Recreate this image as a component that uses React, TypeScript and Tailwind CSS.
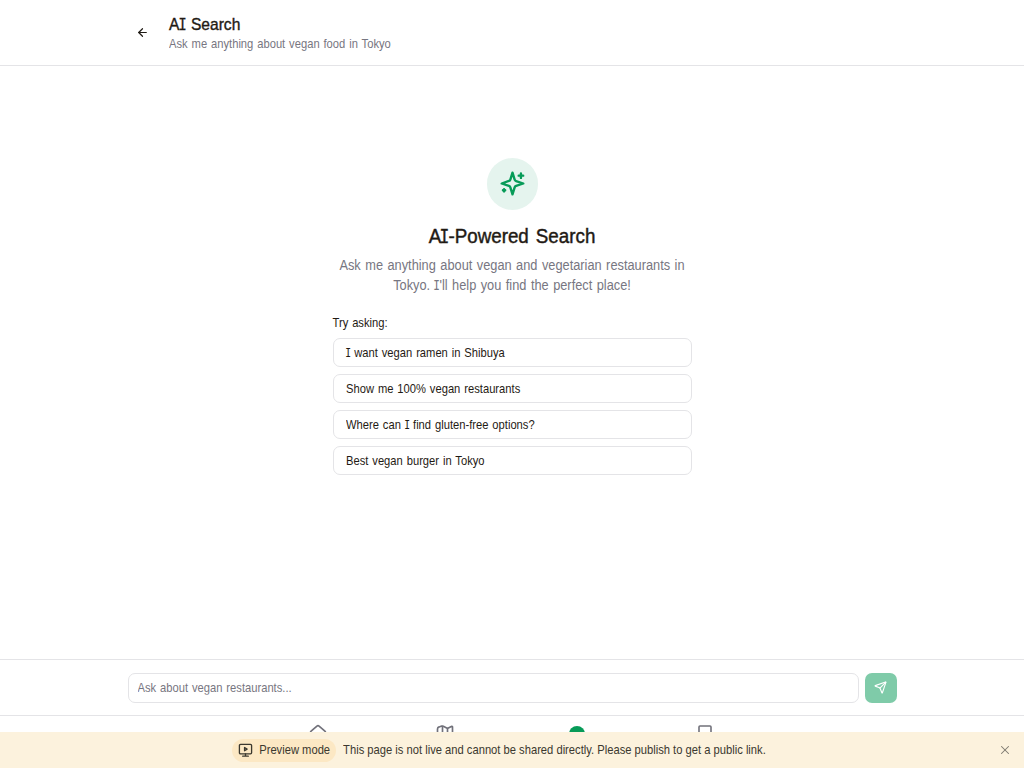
import type { ReactNode } from "react";
import { ArrowLeft, Send, House, X } from "lucide-react";

const suggestions: ReactNode[] = [
  <><SlabI /> want vegan ramen in Shibuya</>,
  "Show me 100% vegan restaurants",
  <>Where can <SlabI /> find gluten-free options?</>,
  "Best vegan burger in Tokyo",
];

function SlabI() {
  return <span className="inline-block w-[0.4em] text-center font-['DejaVu_Sans_Mono',monospace] text-[0.96em] leading-none"><span className="-mx-[0.11em] inline-block scale-x-[0.9]">I</span></span>;
}

function Sparkle() {
  return (
    <svg width="27" height="27" viewBox="0 0 24 24" fill="none" stroke="currentColor" strokeWidth="2.1" strokeLinecap="round" strokeLinejoin="round">
      <path d="m12 2.4-1.912 6.1a2 2 0 0 1-1.275 1.275L2.4 12l6.413 2.1a2 2 0 0 1 1.275 1.275L12 21.6l1.912-6.225a2 2 0 0 1 1.275-1.275L21.6 12l-6.413-2.1a2 2 0 0 1-1.275-1.275L12 2.4Z" />
      <path d="M4.5 17v2M19.5 3v4M3.5 18h2M17.5 5h4" />
    </svg>
  );
}

function MapIcon() {
  return (
    <svg width="20" height="20" viewBox="0 0 24 24" fill="none" stroke="currentColor" strokeWidth="2" strokeLinecap="round" strokeLinejoin="round">
      <path d="M3 6q0-2 2-2.500L8 2.500q1-.3 2 .2l4 2q1 .6 2 0l3.600-1.800A1 1 0 0 1 21 4v13l-6 3-6-3-6 3Z" />
      <path d="M9 3v14M15 6v14" />
    </svg>
  );
}

function ChatIcon() {
  return (
    <svg width="16" height="20" viewBox="0 0 16 20" fill="none" stroke="currentColor" strokeWidth="1.6" strokeLinejoin="round">
      <path d="M3 2h10a1 1 0 0 1 1 1v11H5l-3 3V3a1 1 0 0 1 1-1Z" />
    </svg>
  );
}

function PreviewIcon() {
  return (
    <svg width="15" height="15" viewBox="0 0 16 16" fill="none" stroke="currentColor" strokeWidth="1.4" strokeLinecap="round" strokeLinejoin="round">
      <rect x="1.5" y="1.5" width="13" height="10" rx="1.2" />
      <path d="M8 11.500v2.500M5 14h6M7 4.800v3.500l2.700-1.750z" />
    </svg>
  );
}

export default function App() {
  return (
    <div className="flex h-screen flex-col overflow-hidden bg-white font-['Liberation_Sans',Arial,sans-serif] text-[#1f1a14]">
      <header className="h-[66px] shrink-0 border-b border-[#e4e4e7]">
        <div className="mx-auto flex h-full w-[768px] items-center gap-3">
          <button className="flex size-[29px] items-center justify-center" aria-label="Back">
            <ArrowLeft size={13} strokeWidth={2.2} />
          </button>
          <div className="pt-[2px]">
            <h1 className="scale-y-[1.1] text-[15.6px] leading-[20px] [-webkit-text-stroke:0.35px] [word-spacing:1.2px]">A<SlabI /> Search</h1>
            <p className="mt-px scale-y-[1.12] text-[11.2px] leading-[18px] text-[#777681] [word-spacing:0.8px]">Ask me anything about vegan food in Tokyo</p>
          </div>
        </div>
      </header>

      <main className="flex min-h-0 flex-1 flex-col items-center pt-[92px]">
        <div className="flex h-[52px] w-[51px] items-center justify-center rounded-full bg-[#e5f4ee] pb-px text-[#079b58]">
          <Sparkle />
        </div>
        <h2 className="mt-[14px] scale-y-[1.06] text-[18.8px] leading-[26px] [-webkit-text-stroke:0.4px] [word-spacing:1.8px]">A<SlabI />-Powered Search</h2>
        <p className="mt-[7px] w-[359px] scale-y-[1.08] text-center text-[12.8px] leading-[18.5px] whitespace-nowrap text-[#777681] [word-spacing:0.9px]">
          Ask me anything about vegan and vegetarian restaurants in<br />Tokyo. <SlabI />'ll help you find the perfect place!
        </p>
        <section className="mt-[19px] w-[359px]">
          <h3 className="scale-y-[1.12] text-[11.2px] leading-[20px] [word-spacing:0.8px]">Try asking:</h3>
          <div className="mt-[5px] flex flex-col gap-[7px]">
            {suggestions.map((item, i) => (
              <button key={i} className="h-[29px] rounded-[7px] border border-[#e4e4e7] pt-px pr-3 pl-[12.5px] text-left text-[11.2px] [word-spacing:0.8px]"><span className="inline-block scale-y-[1.12]">{item}</span></button>
            ))}
          </div>
        </section>
      </main>

      <form className="flex h-[56px] shrink-0 items-center border-t border-[#e4e4e7]">
        <div className="mx-auto flex w-[769px] gap-[6px]">
          <div className="flex h-[30px] w-[731px] items-center rounded-[7px] border border-[#e4e4e7] px-[9px] pt-px">
            <input placeholder="Ask about vegan restaurants..." className="w-full scale-y-[1.12] text-[11.2px] outline-none [word-spacing:0.8px] placeholder:text-[#777681]" />
          </div>
          <button type="button" aria-label="Send" className="flex h-[30px] w-8 items-center justify-center rounded-[7px] bg-[#7fcba9] text-white">
            <Send size={13} />
          </button>
        </div>
      </form>

      <nav className="h-[17px] shrink-0 overflow-hidden border-t border-[#e4e4e7] text-[#71717a]">
        <div className="mx-auto grid w-[516px] grid-cols-4 justify-items-center pt-[8px]">
          <span className="pr-[2px]"><House size={20} /></span>
          <span className="pr-[6px]"><MapIcon /></span>
          <span><i className="mt-[2px] block size-4 rounded-full bg-[#079b58]" /></span>
          <span className="pr-px"><ChatIcon /></span>
        </div>
      </nav>

      <aside className="relative flex h-9 shrink-0 items-center justify-center gap-[7px] bg-[#fcf2dd] pr-[26px] text-[11.2px] text-[#3b382f]">
        <span className="flex h-[23px] items-center gap-1.5 rounded-full bg-[#fce8c4] px-1.5"><PreviewIcon /><span className="scale-y-[1.1]">Preview mode</span></span>
        <span className="scale-y-[1.1]">This page is not live and cannot be shared directly. Please publish to get a public link.</span>
        <button aria-label="Close" className="absolute right-3 text-[#7d796f]"><X size={14} strokeWidth={1.8} /></button>
      </aside>
    </div>
  );
}
